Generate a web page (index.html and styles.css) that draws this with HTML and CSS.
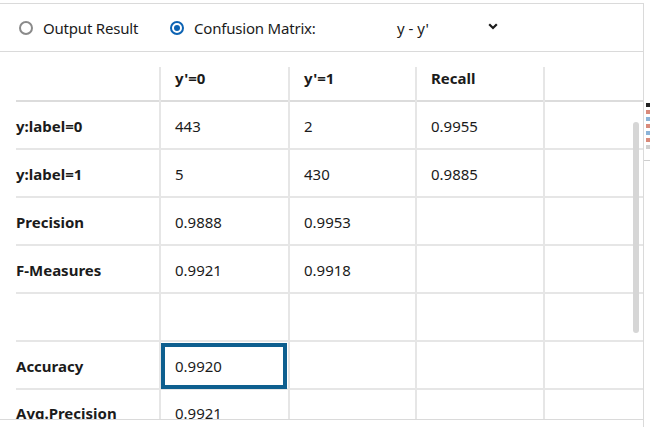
FILE: index.html
```html
<!DOCTYPE html>
<html>
<head>
<meta charset="utf-8">
<link rel="stylesheet" href="styles.css">
</head>
<body>
<div class="screen">
  <div class="panel">
    <div class="toolbar">
      <label class="radio r1"><span class="dot"></span><span>Output Result</span></label>
      <label class="radio r2 on"><span class="dot"></span><span>Confusion Matrix:</span></label>
      <div class="select"><span class="val">y - y'</span>
        <svg class="chev" width="10" height="7" viewBox="0 0 10 7"><path d="M1.2 1.2 L5 5 L8.8 1.2" fill="none" stroke="#1b1b1b" stroke-width="2.2"/></svg>
      </div>
    </div>
    <div class="body">
      <div class="grid">
        <div class="row head"><div class="c lab"></div><div class="c">y'=0</div><div class="c">y'=1</div><div class="c">Recall</div><div class="c"></div></div>
        <div class="row"><div class="c lab">y:label=0</div><div class="c">443</div><div class="c">2</div><div class="c">0.9955</div><div class="c"></div></div>
        <div class="row"><div class="c lab">y:label=1</div><div class="c">5</div><div class="c">430</div><div class="c">0.9885</div><div class="c"></div></div>
        <div class="row"><div class="c lab">Precision</div><div class="c">0.9888</div><div class="c">0.9953</div><div class="c"></div><div class="c"></div></div>
        <div class="row"><div class="c lab">F-Measures</div><div class="c">0.9921</div><div class="c">0.9918</div><div class="c"></div><div class="c"></div></div>
        <div class="row"><div class="c lab"></div><div class="c"></div><div class="c"></div><div class="c"></div><div class="c"></div></div>
        <div class="row"><div class="c lab">Accuracy</div><div class="c sel">0.9920</div><div class="c"></div><div class="c"></div><div class="c"></div></div>
        <div class="row"><div class="c lab">Avg.Precision</div><div class="c">0.9921</div><div class="c"></div><div class="c"></div><div class="c"></div></div>
      </div>
      <div class="scrollbar"></div>
    </div>
    <div class="footer"></div>
  </div>
  <div class="side">
    <div class="thumb">
      <i class="k"></i><i class="r"></i><i class="b"></i><i class="r"></i><i class="b"></i><i class="r"></i><i class="g"></i>
    </div>
  </div>
</div>
</body>
</html>
```

FILE: styles.css
```css
html, body {
  margin: 0;
  padding: 0;
  background: #fff;
}
body {
  width: 650px;
  height: 427px;
  overflow: hidden;
  font-family: "Noto Sans", "Open Sans", sans-serif;
  font-size: 15px;
  color: #1b1b1b;
}
.screen {
  display: flex;
  height: 427px;
}
.panel {
  width: 643px;
  margin-top: 3px;
  border-top: 1px solid #dadada;
  border-right: 1px solid #dadada;
  display: flex;
  flex-direction: column;
}
.toolbar {
  height: 48px;
  border-bottom: 1px solid #dadada;
  display: flex;
  align-items: center;
  padding-left: 19px;
  box-sizing: border-box;
}
.radio {
  display: flex;
  align-items: center;
  gap: 10px;
  letter-spacing: -0.2px;
}
.r1 { width: 151px; }
.r2 { width: 227px; }
.dot {
  width: 14px;
  height: 14px;
  box-sizing: border-box;
  border-radius: 50%;
  border: 2px solid #8a8a8a;
  display: flex;
  align-items: center;
  justify-content: center;
}
.radio.on .dot {
  border-color: #0d63b3;
}
.radio.on .dot::after {
  content: "";
  width: 6px;
  height: 6px;
  border-radius: 50%;
  background: #0d63b3;
}
.select {
  display: flex;
  align-items: center;
}
.val {
  width: 91px;
}
.chev {
  margin-top: -3px;
}
.body {
  position: relative;
  height: 367px;
  overflow: hidden;
}
.grid {
  padding-left: 16px;
  padding-top: 15px;
}
.row {
  display: grid;
  grid-template-columns: 143px 129px 127px 128px 85px;
  height: 48px;
  box-sizing: border-box;
  border-bottom: 2px solid #e6e6e6;
}
.row.head {
  height: 35px;
  border-bottom-color: #dcdcdc;
}
.row .c {
  position: relative;
  display: flex;
  align-items: center;
  padding-left: 14px;
  border-left: 2px solid #e6e6e6;
  box-sizing: border-box;
  margin-bottom: -2px;
}
.row .c.lab {
  border-left: none;
  padding-left: 0;
  font-weight: 700;
}
.row.head .c {
  font-weight: 700;
  align-items: flex-start;
  padding-top: 1px;
}
.row:last-child .c {
  margin-bottom: 0;
}
.row .c.sel::after {
  content: "";
  position: absolute;
  left: 0;
  right: 1px;
  top: 1px;
  bottom: 1px;
  border: 4px solid #0e5f8f;
}
.scrollbar {
  position: absolute;
  left: 633px;
  top: 70px;
  width: 6px;
  height: 211px;
  border-radius: 3px;
  background: #d6d6d6;
}
.footer {
  border-top: 1px solid #dadada;
  flex: 1;
}
.side {
  width: 6px;
  padding-top: 101px;
}
.thumb {
  display: flex;
  flex-direction: column;
  gap: 3px;
  padding: 2px 0 4px 2px;
  border-bottom: 1px solid #cfcfcf;
  height: 60px;
  box-sizing: border-box;
}
.thumb i {
  display: block;
  height: 4px;
  width: 4px;
}
.thumb .k { background: #222; }
.thumb .r { background: #d98a7a; }
.thumb .b { background: #8bb3d8; }
.thumb .g { background: #cfcfcf; }
```
